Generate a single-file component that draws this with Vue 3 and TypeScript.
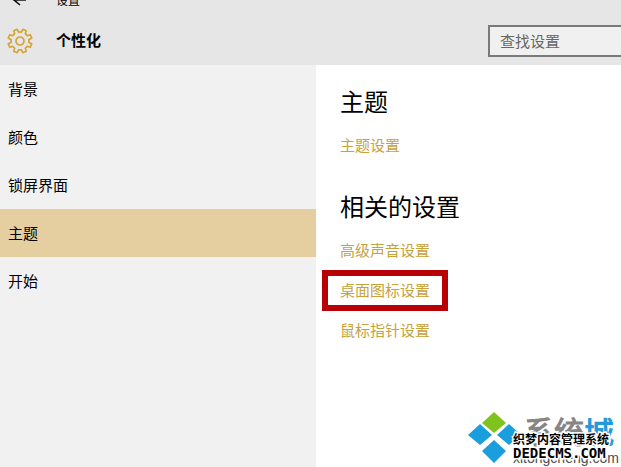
<script setup lang="ts">
import { ref } from 'vue'

interface RelatedLink {
  label: string
  marked: boolean
}

const sections: string[] = ['背景', '颜色', '锁屏界面', '主题', '开始']
const active = ref<string>('主题')
const query = ref<string>('')

const related: RelatedLink[] = [
  { label: '高级声音设置', marked: false },
  { label: '桌面图标设置', marked: true },
  { label: '鼠标指针设置', marked: false },
]

// Outline of an eight-toothed gear centred on the origin.
function gearPath(teeth: number, outer: number, inner: number): string {
  const step = (Math.PI * 2) / teeth
  const points: string[] = []
  for (let i = 0; i < teeth; i++) {
    const mid = (i + 0.5) * step
    const corners: [number, number][] = [
      [-0.3, inner],
      [-0.2, outer],
      [0.2, outer],
      [0.3, inner],
    ]
    for (const [offset, radius] of corners) {
      const angle = mid + offset * step
      points.push(`${(Math.cos(angle) * radius).toFixed(2)} ${(Math.sin(angle) * radius).toFixed(2)}`)
    }
  }
  return `M${points.join('L')}Z`
}

const gear = gearPath(8, 12, 9)
</script>

<template>
  <div class="window">
    <header class="header">
      <div class="titlebar">
        <button class="back" type="button" aria-label="返回">
          <svg width="16" height="12" viewBox="0 0 16 12" fill="none" stroke="#111" stroke-width="1.6">
            <path d="M2 6H14M8 1L2 6L8 11" />
          </svg>
        </button>
        <span class="app-name">设置</span>
      </div>
      <div class="heading">
        <svg class="gear" width="26" height="26" viewBox="-13 -13 26 26" fill="none" stroke="#d5a536" stroke-width="1.7" stroke-linejoin="round">
          <path :d="gear" />
          <circle r="4" />
        </svg>
        <h1>个性化</h1>
        <input v-model="query" class="search" type="text" placeholder="查找设置" aria-label="查找设置" />
      </div>
    </header>

    <div class="body">
      <nav class="sidebar">
        <button
          v-for="name in sections"
          :key="name"
          type="button"
          class="nav-item"
          :class="{ active: name === active }"
          @click="active = name"
        >
          {{ name }}
        </button>
      </nav>
      <main class="content">
        <h2>主题</h2>
        <a class="link" href="#">主题设置</a>
        <h2 class="second">相关的设置</h2>
        <a v-for="item in related" :key="item.label" class="link" :class="{ marked: item.marked }" href="#">{{ item.label }}</a>
      </main>
    </div>

    <div class="watermark">
      <svg class="diamonds" width="54" height="54" viewBox="0 0 54 54">
        <path fill="#7fc31c" d="M26 1L38 12L26 22L14 12Z" />
        <path fill="#1b9ede" d="M12 13L24 24L12 34L0 24ZM41 13L53 24L41 34L29 24ZM26 29L38 40L26 52L14 40Z" />
      </svg>
      <div class="brand">系统<span class="brand-blue">城</span></div>
      <div class="site">xitongcheng.com</div>
      <div class="cms">织梦内容管理系统</div>
      <div class="cms-site">DEDECMS.COM</div>
    </div>
  </div>
</template>

<style>
body {
  margin: 0;
  overflow: hidden;
}
</style>

<style scoped>
.window {
  position: relative;
  display: flex;
  flex-direction: column;
  min-height: 100vh;
  overflow: hidden;
  background: #fff;
  color: #000;
  font: 15px/20px "Liberation Sans", "Noto Sans CJK SC", sans-serif;
}

.header {
  height: 65px;
  background: #e6e6e6;
}

.titlebar {
  display: flex;
  align-items: flex-end;
  height: 8px;
  padding-left: 12px;
  overflow: hidden;
}

.back {
  display: flex;
  flex: none;
  width: 44px;
  padding: 0 0 2px;
  border: 0;
  background: none;
}

.app-name {
  font-size: 12px;
  line-height: 14px;
}

.heading {
  display: flex;
  align-items: center;
  height: 66px;
  padding-left: 7px;
}

.heading {
  height: 66px;
}

.gear {
  flex: none;
}

h1 {
  flex: 1;
  margin: 0 0 0 23px;
  font-size: 15px;
  line-height: 20px;
}

.search {
  box-sizing: border-box;
  width: 142px;
  height: 32px;
  margin-right: -9px;
  padding: 0 10px;
  border: 2px solid #7a7a7a;
  border-radius: 0;
  background: #f0f0f0;
  color: #000;
  font: inherit;
}

.search::placeholder {
  color: #666;
  opacity: 1;
}

.body {
  display: flex;
  flex: 1;
}

.sidebar {
  display: flex;
  flex: none;
  flex-direction: column;
  width: 316px;
  background: #f1f1f1;
}

.nav-item {
  height: 48px;
  padding: 2px 8px 0;
  border: 0;
  background: none;
  color: #000;
  font: inherit;
  text-align: left;
}

.nav-item.active {
  background: #e5cfa1;
}

.content {
  display: flex;
  flex: 1;
  flex-direction: column;
  align-items: flex-start;
  padding: 20px 24px;
}

h2 {
  margin: 0 0 10px;
  font-size: 24px;
  font-weight: 400;
  line-height: 36px;
}

h2.second {
  margin-top: 19px;
}

.link {
  margin-bottom: 10px;
  padding: 5px 0;
  color: #c6a23a;
  text-decoration: none;
}

.marked {
  position: relative;
}

.marked::after {
  position: absolute;
  inset: -6px -18px -5px;
  border: 6px solid #b80007;
  content: "";
}

.watermark {
  position: absolute;
  right: 0;
  bottom: 0;
  width: 153px;
  height: 56px;
  white-space: nowrap;
}

.watermark > * {
  position: absolute;
}

.diamonds {
  top: 0;
  left: 0;
}

.brand {
  top: 4px;
  left: 56px;
  color: #858585;
  font-size: 30px;
  line-height: 36px;
  -webkit-text-stroke: 1px #858585;
}

.brand-blue {
  color: #249bd7;
  font-weight: 700;
  -webkit-text-stroke: 0;
}

.site {
  top: 38px;
  left: 45px;
  color: #4d4d4d;
  font-size: 14px;
  line-height: 18px;
}

.cms,
.cms-site {
  left: 45px;
  color: #000;
  font-weight: 700;
  paint-order: stroke fill;
  -webkit-text-stroke: 3px #fff;
}

.cms {
  top: 20px;
  font-size: 12px;
  line-height: 18px;
}

.cms-site {
  top: 34px;
  font-family: "DejaVu Sans Mono", monospace;
  font-size: 14px;
  line-height: 16px;
}
</style>
